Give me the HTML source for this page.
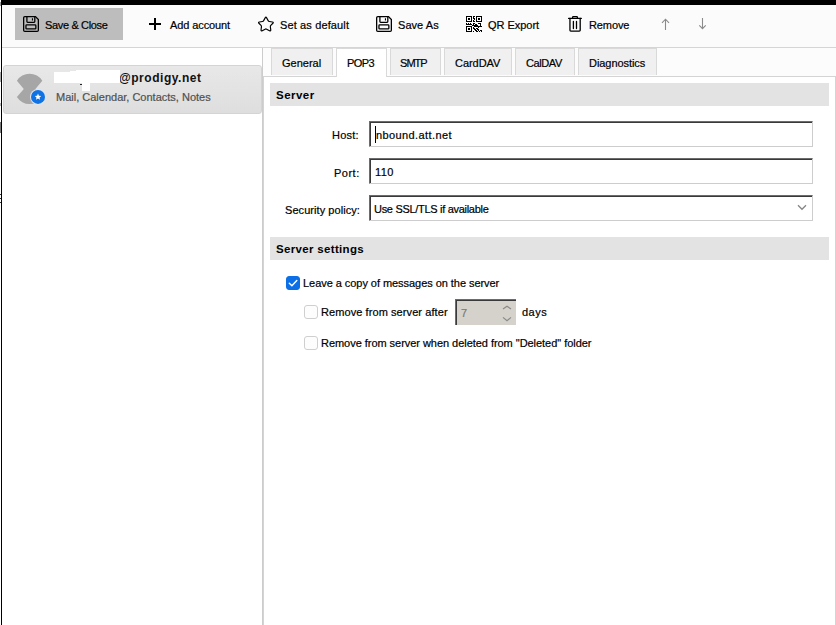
<!DOCTYPE html>
<html><head><meta charset="utf-8">
<style>
html,body{margin:0;padding:0;}
body{width:836px;height:625px;overflow:hidden;position:relative;background:#fff;font-family:"Liberation Sans",sans-serif;color:#000;}
.t{-webkit-text-stroke:0.2px currentColor;}
.a{position:absolute;}
.t{position:absolute;font-size:11px;line-height:13px;white-space:pre;}
.b{font-weight:bold;-webkit-text-stroke:0 !important;}
svg{position:absolute;overflow:visible;}
.tab{position:absolute;top:48px;height:27px;background:#f0f0f0;border:1px solid #d9d9d9;border-bottom:none;box-sizing:border-box;}
.inp{position:absolute;left:369px;width:444px;height:26px;box-sizing:border-box;background:#fff;border-top:1px solid #6c6c6c;border-left:1px solid #6c6c6c;border-right:1px solid #cdcdcd;border-bottom:1px solid #cdcdcd;box-shadow:inset 1px 1px 0 #3a3a3a;}
.cb{position:absolute;width:14px;height:14px;box-sizing:border-box;border:1px solid #cfcfcf;border-radius:3px;background:#fdfdfd;}
</style></head>
<body>
<!-- top black bar -->
<div class="a" style="left:1px;top:0;width:835px;height:5px;background:#000"></div>
<div class="a" style="left:0;top:2px;width:1px;height:4px;background:#9a9a9a"></div>
<!-- toolbar -->
<div class="a" style="left:2px;top:5px;width:834px;height:42px;background:#fbfbfb"></div>
<div class="a" style="left:2px;top:47px;width:834px;height:1px;background:#d5d5d5"></div>
<!-- left black line -->
<div class="a" style="left:1px;top:0;width:1px;height:625px;background:#000"></div>

<div class="a" style="left:0;top:72px;width:1px;height:10px;background:#a8a8a8"></div>
<div class="a" style="left:0;top:103px;width:1px;height:3px;background:#b8b8b8"></div>
<div class="a" style="left:0;top:122px;width:1px;height:11px;background:#787878"></div>
<div class="a" style="left:0;top:194px;width:1px;height:1px;background:#333"></div>
<div class="a" style="left:0;top:198px;width:1px;height:1px;background:#333"></div>
<div class="a" style="left:0;top:202px;width:1px;height:1px;background:#333"></div>
<!-- Save & Close button -->
<div class="a" style="left:15px;top:8px;width:108px;height:32px;background:#bdbdbd"></div>
<svg style="left:23px;top:16px" width="16" height="16" viewBox="0 0 16 16" fill="none" stroke="#000" stroke-width="1.3">
  <path d="M1.8,0.65 H12.5 L15.35,3.5 V14.2 Q15.35,15.35 14.2,15.35 H1.8 Q0.65,15.35 0.65,14.2 V1.8 Q0.65,0.65 1.8,0.65 Z"/>
  <path d="M3.9,0.65 V5.6 Q3.9,6.3 4.6,6.3 H11.1 Q11.8,6.3 11.8,5.6 V0.65"/>
  <path d="M9.45,2.3 V4.4" stroke-width="1.1"/>
  <rect x="2.95" y="8.95" width="9.9" height="3.9" rx="0.7"/>
</svg>
<div class="t" style="left:45px;top:19px;letter-spacing:-0.35px">Save &amp; Close</div>

<!-- Add account -->
<svg style="left:149px;top:18px" width="12" height="12" viewBox="0 0 12 12" stroke="#000" stroke-width="2">
  <path d="M6,0 V12 M0,6 H12"/>
</svg>
<div class="t" style="left:170px;top:19px;letter-spacing:-0.1px">Add account</div>

<!-- Set as default -->
<svg style="left:255px;top:13px" width="22" height="22" viewBox="0 0 22 22" fill="none" stroke="#000" stroke-width="1.15" stroke-linejoin="round">
  <path d="M10.16,4.86 Q10.90,3.50 11.64,4.86 L13.15,7.62 Q13.55,8.35 14.35,8.48 L17.40,8.96 Q18.90,9.20 17.88,10.26 L15.80,12.43 Q15.25,13.00 15.36,13.81 L15.75,16.89 Q15.95,18.40 14.54,17.66 L11.66,16.15 Q10.90,15.75 10.14,16.15 L7.26,17.66 Q5.85,18.40 6.05,16.89 L6.44,13.81 Q6.55,13.00 6.00,12.43 L3.92,10.26 Q2.90,9.20 4.40,8.96 L7.45,8.48 Q8.25,8.35 8.65,7.62 Z"/>
</svg>
<div class="t" style="left:280px;top:19px;letter-spacing:0.13px">Set as default</div>

<!-- Save As -->
<svg style="left:376px;top:16px" width="16" height="16" viewBox="0 0 16 16" fill="none" stroke="#000" stroke-width="1.3">
  <path d="M1.8,0.65 H12.5 L15.35,3.5 V14.2 Q15.35,15.35 14.2,15.35 H1.8 Q0.65,15.35 0.65,14.2 V1.8 Q0.65,0.65 1.8,0.65 Z"/>
  <path d="M3.9,0.65 V5.6 Q3.9,6.3 4.6,6.3 H11.1 Q11.8,6.3 11.8,5.6 V0.65"/>
  <path d="M9.45,2.3 V4.4" stroke-width="1.1"/>
  <rect x="2.95" y="8.95" width="9.9" height="3.9" rx="0.7"/>
</svg>
<div class="t" style="left:398px;top:19px;letter-spacing:0.05px">Save As</div>

<!-- QR Export -->
<svg style="left:466px;top:16px" width="16" height="16" viewBox="0 0 16 16" fill="#000" shape-rendering="crispEdges"><rect x="0" y="0" width="6" height="1"/><rect x="7" y="0" width="2" height="1"/><rect x="10" y="0" width="6" height="1"/><rect x="0" y="1" width="1" height="1"/><rect x="5" y="1" width="1" height="1"/><rect x="7" y="1" width="1" height="1"/><rect x="10" y="1" width="1" height="1"/><rect x="15" y="1" width="1" height="1"/><rect x="0" y="2" width="1" height="1"/><rect x="2" y="2" width="2" height="1"/><rect x="5" y="2" width="1" height="1"/><rect x="7" y="2" width="2" height="1"/><rect x="10" y="2" width="1" height="1"/><rect x="12" y="2" width="2" height="1"/><rect x="15" y="2" width="1" height="1"/><rect x="0" y="3" width="1" height="1"/><rect x="2" y="3" width="2" height="1"/><rect x="5" y="3" width="1" height="1"/><rect x="8" y="3" width="1" height="1"/><rect x="10" y="3" width="1" height="1"/><rect x="12" y="3" width="2" height="1"/><rect x="15" y="3" width="1" height="1"/><rect x="0" y="4" width="1" height="1"/><rect x="5" y="4" width="1" height="1"/><rect x="7" y="4" width="1" height="1"/><rect x="10" y="4" width="1" height="1"/><rect x="15" y="4" width="1" height="1"/><rect x="0" y="5" width="6" height="1"/><rect x="7" y="5" width="2" height="1"/><rect x="10" y="5" width="6" height="1"/><rect x="0" y="7" width="1" height="1"/><rect x="2" y="7" width="1" height="1"/><rect x="4" y="7" width="1" height="1"/><rect x="7" y="7" width="2" height="1"/><rect x="12" y="7" width="3" height="1"/><rect x="0" y="8" width="6" height="1"/><rect x="7" y="8" width="1" height="1"/><rect x="9" y="8" width="2" height="1"/><rect x="14" y="8" width="1" height="1"/><rect x="6" y="9" width="6" height="1"/><rect x="14" y="9" width="1" height="1"/><rect x="0" y="10" width="6" height="1"/><rect x="8" y="10" width="8" height="1"/><rect x="0" y="11" width="1" height="1"/><rect x="5" y="11" width="1" height="1"/><rect x="7" y="11" width="1" height="1"/><rect x="12" y="11" width="1" height="1"/><rect x="0" y="12" width="1" height="1"/><rect x="2" y="12" width="2" height="1"/><rect x="5" y="12" width="1" height="1"/><rect x="7" y="12" width="2" height="1"/><rect x="10" y="12" width="2" height="1"/><rect x="0" y="13" width="1" height="1"/><rect x="2" y="13" width="2" height="1"/><rect x="5" y="13" width="1" height="1"/><rect x="8" y="13" width="2" height="1"/><rect x="11" y="13" width="2" height="1"/><rect x="0" y="14" width="1" height="1"/><rect x="5" y="14" width="1" height="1"/><rect x="9" y="14" width="2" height="1"/><rect x="12" y="14" width="1" height="1"/><rect x="14" y="14" width="2" height="1"/><rect x="0" y="15" width="6" height="1"/><rect x="7" y="15" width="1" height="1"/><rect x="10" y="15" width="2" height="1"/><rect x="13" y="15" width="1" height="1"/><rect x="15" y="15" width="1" height="1"/></svg>
<div class="t" style="left:488px;top:19px;letter-spacing:-0.03px">QR Export</div>

<!-- Remove -->
<svg style="left:564px;top:13px" width="22" height="22" viewBox="0 0 22 22" fill="none" stroke="#000" stroke-width="1.3" stroke-linecap="round" stroke-linejoin="round">
  <path d="M4.6,5.45 H17.3"/>
  <path d="M8.6,5.3 V4.3 Q8.6,3.6 9.3,3.6 H12.7 Q13.4,3.6 13.4,4.3 V5.3"/>
  <path d="M5.95,5.5 V17.3 Q5.95,18.1 6.8,18.1 H15.3 Q16.2,18.1 16.2,17.3 V5.5"/>
  <path d="M9.4,8.4 V15.6 M12.5,8.4 V15.6"/>
</svg>
<div class="t" style="left:589px;top:19px;letter-spacing:-0.1px">Remove</div>

<!-- arrows -->
<svg style="left:658px;top:16px" width="16" height="16" viewBox="0 0 16 16" fill="none" stroke="#8a8a8a" stroke-width="1.1">
  <path d="M7.5,3.2 V14 M4,6.8 L7.5,3.2 L11,6.8"/>
</svg>
<svg style="left:695px;top:16px" width="16" height="16" viewBox="0 0 16 16" fill="none" stroke="#8a8a8a" stroke-width="1.1">
  <path d="M7.5,2 V12.6 M4.3,9.3 L7.5,12.6 L10.7,9.3"/>
</svg>

<!-- splitter -->
<div class="a" style="left:262px;top:48px;width:1px;height:577px;background:#cccccc"></div>

<!-- account card -->
<div class="a" style="left:3px;top:65px;width:259px;height:49px;box-sizing:border-box;background:linear-gradient(#e8e8e8,#dedede);border:1px solid #d4d4d4;border-radius:3px"></div>
<svg style="left:0;top:0" width="60" height="120" viewBox="0 0 60 120">
  <path d="M16.9,80.7 A15,15 0 0 1 42.3,80.7 L35.4,88.9 L42.3,97.1 A15,15 0 0 1 16.9,97.1 L23.8,88.9 Z" fill="#a6a6a6"/>
  <circle cx="38" cy="96.9" r="8" fill="#dfe6ee"/>
  <circle cx="38" cy="96.9" r="7" fill="#0f72e5"/>
  <path d="M38,93.6 L38.95,95.8 L41.2,96 L39.5,97.5 L40,99.8 L38,98.6 L36,99.8 L36.5,97.5 L34.8,96 L37.05,95.8 Z" fill="#fff"/>
</svg>
<div class="t b" style="left:119px;top:72px;font-size:12px;line-height:13px;letter-spacing:0.53px;color:#111">@prodigy.net</div>
<div class="t" style="left:56px;top:91px;color:#505050">Mail, Calendar, Contacts, Notes</div>
<div class="a" style="left:54px;top:72px;width:16px;height:11px;background:#fff"></div>
<div class="a" style="left:70px;top:71px;width:6px;height:12px;background:#fff"></div>
<div class="a" style="left:76px;top:70px;width:44px;height:13px;background:#fff"></div>
<div class="a" style="left:82px;top:83px;width:8px;height:8px;background:#fff"></div>
<div class="a" style="left:80px;top:84px;width:2px;height:1px;background:#222"></div>

<!-- tab strip -->
<div class="a" style="left:263px;top:48px;width:573px;height:28px;background:#fcfcfc"></div>
<div class="a" style="left:263px;top:76px;width:573px;height:549px;box-sizing:border-box;border:1px solid #d4d4d4;border-bottom:none;background:#fff"></div>
<div class="tab" style="left:271px;width:62px"></div>
<div class="tab" style="left:336px;width:51px;background:#fff;height:29px"></div>
<div class="tab" style="left:390px;width:51px"></div>
<div class="tab" style="left:444px;width:68px"></div>
<div class="tab" style="left:515px;width:60px"></div>
<div class="tab" style="left:578px;width:79px"></div>
<div class="t" style="left:282px;top:57px;letter-spacing:0px">General</div>
<div class="t" style="left:347px;top:57px;letter-spacing:-0.55px">POP3</div>
<div class="t" style="left:400px;top:57px;letter-spacing:-0.95px">SMTP</div>
<div class="t" style="left:455px;top:57px;letter-spacing:-0.05px">CardDAV</div>
<div class="t" style="left:526px;top:57px;letter-spacing:-0.4px">CalDAV</div>
<div class="t" style="left:589px;top:57px;letter-spacing:-0.06px">Diagnostics</div>

<!-- Server header -->
<div class="a" style="left:270px;top:83px;width:559px;height:23px;background:#e3e3e3"></div>
<div class="t b" style="left:276px;top:89px;font-size:11.5px;letter-spacing:0.47px">Server</div>

<div class="t" style="left:332px;top:129px;letter-spacing:0.25px">Host:</div>
<div class="inp" style="top:121px"></div>
<div class="a" style="left:375px;top:126px;width:1px;height:17px;background:#000"></div>
<div class="t" style="left:376px;top:129px;letter-spacing:0.4px">nbound.att.net</div>

<div class="t" style="left:334px;top:167px;letter-spacing:0.5px">Port:</div>
<div class="inp" style="top:158px"></div>
<div class="t" style="left:375px;top:166px;letter-spacing:0.4px">110</div>

<div class="t" style="left:285px;top:204px;letter-spacing:0.06px">Security policy:</div>
<div class="inp" style="top:195px"></div>
<div class="t" style="left:374px;top:203px;letter-spacing:-0.3px">Use SSL/TLS if available</div>
<svg style="left:797px;top:204px" width="10" height="7" viewBox="0 0 10 7" fill="none" stroke="#858585" stroke-width="1.25">
  <path d="M1,1.3 L5,5.3 L9,1.3"/>
</svg>

<!-- Server settings header -->
<div class="a" style="left:270px;top:237px;width:559px;height:23px;background:#e3e3e3"></div>
<div class="t b" style="left:276px;top:243px;font-size:11.5px;letter-spacing:0.33px">Server settings</div>

<!-- checkboxes -->
<div class="cb" style="left:286px;top:276px;background:#0d6fe6;border-color:#0d6fe6"></div>
<svg style="left:286px;top:276px" width="14" height="14" viewBox="0 0 14 14" fill="none" stroke="#fff" stroke-width="1.4" stroke-linecap="round" stroke-linejoin="round">
  <path d="M3.3,7.2 L5.9,9.7 L10.8,4.4"/>
</svg>
<div class="t" style="left:303px;top:277px;letter-spacing:-0.05px">Leave a copy of messages on the server</div>

<div class="cb" style="left:304px;top:305px"></div>
<div class="t" style="left:321px;top:306px;letter-spacing:0.08px">Remove from server after</div>
<div class="a" style="left:455px;top:299px;width:61px;height:26px;box-sizing:border-box;background:#d5d2cc;border-top:1px solid #6c6c6c;border-left:1px solid #6c6c6c;box-shadow:inset 1px 1px 0 #3a3a3a"></div>
<div class="t" style="left:461px;top:307px;color:#7a7a7a">7</div>
<svg style="left:502px;top:304px" width="10" height="18" viewBox="0 0 10 18" fill="none" stroke="#8a8a8a" stroke-width="1.2">
  <path d="M1,5 L5,2.2 L9,5 M1,13.4 L5,16.8 L9,13.4"/>
</svg>
<div class="t" style="left:522px;top:306px;letter-spacing:0.5px">days</div>

<div class="cb" style="left:304px;top:336px"></div>
<div class="t" style="left:321px;top:337px;letter-spacing:-0.04px">Remove from server when deleted from "Deleted" folder</div>
</body></html>
